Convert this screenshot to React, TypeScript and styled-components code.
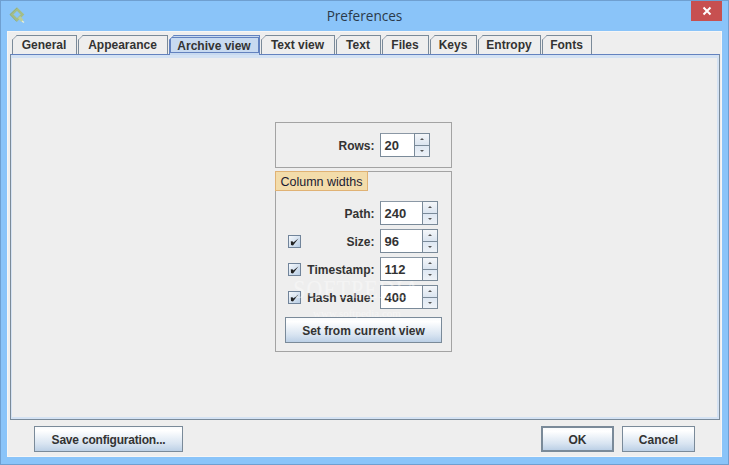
import styled, { createGlobalStyle } from 'styled-components'

const GlobalStyle = createGlobalStyle`
  html, body {
    margin: 0;
    padding: 0;
    background: #8ac4f9;
  }
  * {
    box-sizing: border-box;
  }
`

const Frame = styled.div`
  position: relative;
  width: 729px;
  height: 465px;
  display: flex;
  flex-direction: column;
  background: #8ac4f9;
  border: 1px solid #6f9fd0;
  font-family: 'Liberation Sans', Arial, sans-serif;
  font-size: 12px;
  font-weight: 700;
  color: #333;
  overflow: hidden;
`

const TitleBar = styled.div`
  position: relative;
  height: 29px;
  flex: none;
  display: flex;
  align-items: center;
  justify-content: center;
`

const AppIcon = styled.svg`
  position: absolute;
  left: 8px;
  top: 6px;
`

const TitleText = styled.div`
  font-family: 'Open Sans', 'Noto Sans', sans-serif;
  font-size: 13.6px;
  font-weight: 400;
  color: #2b3a4a;
`

const CloseButton = styled.div`
  position: absolute;
  right: 6px;
  top: 0;
  width: 31px;
  height: 20px;
  background: #c75050;
  display: flex;
  align-items: center;
  justify-content: center;
`

const Client = styled.div`
  margin: 1px 6px 7px 6px;
  flex: 1;
  min-height: 0;
  background: #eeeeee;
  border: 1px solid #f6f6f6;
  display: flex;
  flex-direction: column;
  padding: 3px 1px 0 2px;
`

const TabRow = styled.div`
  display: flex;
  height: 19px;
  padding-left: 2px;
  flex: none;
  position: relative;
  z-index: 1;
`

const Tab = styled.div<{ $w: number; $active?: boolean }>`
  position: relative;
  width: ${({ $w }) => $w}px;
  height: ${({ $active }) => ($active ? 20 : 19)}px;
  display: flex;
  align-items: center;
  justify-content: center;
  padding-right: 1px;
  margin-right: 1px;
  background: ${({ $active }) => ($active ? '#c8daf0' : '#eeeeee')};
  border: 1px solid ${({ $active }) => ($active ? '#6382bf' : '#7a8a99')};
  border-bottom: 0;
  clip-path: polygon(5px 0, 100% 0, 100% 100%, 0 100%, 0 5px);

  ${({ $active }) =>
    $active
      ? `
    &::after {
      content: '';
      position: absolute;
      top: 1px;
      left: 0;
      right: 0;
      bottom: 2px;
      border: 1px solid #6382bf;
    }
  `
      : ''}
`

const TabCorner = styled.span<{ $active?: boolean }>`
  position: absolute;
  left: -2px;
  top: 1px;
  width: 7px;
  height: 1px;
  background: ${({ $active }) => ($active ? '#6382bf' : '#7a8a99')};
  transform: rotate(-45deg);
`

const TabPane = styled.div`
  width: 710px;
  height: 366px;
  flex: none;
  border: 1px solid #7a8a99;
  border-top-color: #6382bf;
  background: #eeeeee;
  box-shadow: inset 1px 0 0 #d4e2f3, inset -2px 0 0 #d4e2f3, inset 0 3px 0 #d4e2f3, inset 0 -2px 0 #d4e2f3;
  display: flex;
  flex-direction: column;
  align-items: center;
  padding: 67px 4px 0 0;
  gap: 3px;
`

const Group = styled.div<{ $h: number }>`
  position: relative;
  width: 177px;
  height: ${({ $h }) => $h}px;
  border: 1px solid #a3a3a3;
  display: flex;
  flex-direction: column;
`

const GroupTitle = styled.div`
  width: 93px;
  height: 20px;
  margin: -1px 0 0 -1px;
  background: #f3dcaa;
  border: 1px solid #e0b274;
  color: #1a1a33;
  font-weight: 400;
  font-size: 12.5px;
  display: flex;
  align-items: center;
  padding: 1px 0 0 5px;
`

const Rows = styled.div`
  display: flex;
  flex-direction: column;
  gap: 4px;
  padding: 10px 0 0 12px;
`

const Row = styled.div`
  display: flex;
  align-items: center;
  height: 24px;
`

const Check = styled.div`
  width: 13px;
  height: 13px;
  flex: none;
  border: 1px solid #71849a;
  background: linear-gradient(135deg, #f6f9fc, #b8cde4);
  display: flex;
  align-items: center;
  justify-content: center;
`

const FieldLabel = styled.label`
  flex: 1;
  text-align: right;
  padding: 1px 5px 0 0;
`

const Spinner = styled.div<{ $w: number; $end: number }>`
  display: flex;
  width: ${({ $w }) => $w}px;
  height: 24px;
  flex: none;
  margin-right: ${({ $end }) => $end}px;
`

const Field = styled.div`
  flex: 1;
  background: #fff;
  border: 1px solid #7a8a99;
  border-top-color: #8b98a5;
  border-right: 0;
  padding: 0 0 0 4px;
  display: flex;
  align-items: center;
  font-size: 13px;
`

const Arrows = styled.div`
  width: 16px;
  flex: none;
  display: flex;
  flex-direction: column;
`

const ArrowButton = styled.div<{ $down?: boolean }>`
  flex: 1;
  border: 1px solid #7a8a99;
  margin-top: ${({ $down }) => ($down ? '-1px' : '0')};
  background: linear-gradient(${({ $down }) => ($down ? '#dfe8f3, #eef2f7' : '#f4f6f9, #dbe5f0')});
  display: flex;
  align-items: center;
  justify-content: center;
`

const Tri = styled.span<{ $down?: boolean }>`
  width: 0;
  height: 0;
  border-left: 2px solid transparent;
  border-right: 2px solid transparent;
  ${({ $down }) => ($down ? 'border-top: 2px solid #555;' : 'border-bottom: 2px solid #555;')}
`

const Button = styled.div<{ $w: number; $default?: boolean }>`
  width: ${({ $w }) => $w}px;
  height: 26px;
  flex: none;
  display: flex;
  align-items: center;
  justify-content: center;
  padding-top: 1px;
  border: ${({ $default }) => ($default ? 2 : 1)}px solid #7a8a99;
  background: linear-gradient(#f8fafc 0%, #ffffff 15%, #d8e4f1 70%, #bcd0e6 100%);
`

const SetButton = styled(Button)`
  margin: 8px 0 0 9px;
  padding-left: 1px;
`

const SaveButton = styled(Button)`
  letter-spacing: -0.2px;
`

const Footer = styled.div`
  display: flex;
  align-items: center;
  padding: 6px 25px 0 24px;
  gap: 8px;
`

const Spacer = styled.div`
  flex: 1;
`

const Watermark = styled.div`
  position: absolute;
  left: 276px;
  top: 277px;
  width: 160px;
  text-align: center;
  color: rgba(255, 255, 255, 0.4);
  font-family: 'Liberation Serif', serif;
  font-weight: 400;
  pointer-events: none;
`

const WatermarkBig = styled.div`
  font-size: 22px;
  letter-spacing: 1px;
  line-height: 24px;
  transform: scaleY(1.15);
`

const WatermarkSmall = styled.div`
  font-size: 11px;
  line-height: 12px;
  margin-top: 5px;
`

const tabs = [
  { label: 'General', w: 65 },
  { label: 'Appearance', w: 90 },
  { label: 'Archive view', w: 91, active: true },
  { label: 'Text view', w: 74 },
  { label: 'Text', w: 45 },
  { label: 'Files', w: 47 },
  { label: 'Keys', w: 47 },
  { label: 'Entropy', w: 63 },
  { label: 'Fonts', w: 50 },
]

const columns = [
  { label: 'Path:', value: '240' },
  { label: 'Size:', value: '96', check: true },
  { label: 'Timestamp:', value: '112', check: true },
  { label: 'Hash value:', value: '400', check: true },
]

const Tick = () => (
  <svg width="9" height="9" viewBox="0 0 9 9">
    <path d="M0.8 4.2 L3 4.4 L3.3 5.4 L8.4 1.6 L3 8.4 L1 8 Z" fill="#222" />
  </svg>
)

const Spin = ({ value, width, end }: { value: string; width: number; end: number }) => (
  <Spinner $w={width} $end={end}>
    <Field>{value}</Field>
    <Arrows>
      <ArrowButton>
        <Tri />
      </ArrowButton>
      <ArrowButton $down>
        <Tri $down />
      </ArrowButton>
    </Arrows>
  </Spinner>
)

const App = () => {
  return (
    <Frame>
      <GlobalStyle />
      <TitleBar>
        <AppIcon width="18" height="18" viewBox="0 0 18 18">
          <path d="M8 2 L2.5 7.5 L8 13 L13.5 7.5 Z" fill="none" stroke="#a3bd88" strokeWidth="2.6" />
          <path d="M8 1 L1 7.5 L7.5 14.5" fill="none" stroke="#8fa97c" strokeWidth="0.8" />
          <path d="M10 10 L13.5 14" stroke="#b9cd9c" strokeWidth="3" />
          <path d="M13 14 L15 15.5" stroke="#e8efd6" strokeWidth="1.5" />
        </AppIcon>
        <TitleText>Preferences</TitleText>
        <CloseButton>
          <svg width="10" height="10" viewBox="0 0 10 10">
            <path d="M1.5 1.5 L8.5 8.5 M8.5 1.5 L1.5 8.5" stroke="#fff" strokeWidth="2" />
          </svg>
        </CloseButton>
      </TitleBar>
      <Client>
        <TabRow>
          {tabs.map((t) => (
            <Tab key={t.label} $w={t.w} $active={t.active}>
              <TabCorner $active={t.active} />
              {t.label}
            </Tab>
          ))}
        </TabRow>
        <TabPane>
          <Group $h={46}>
            <Rows>
              <Row>
                <FieldLabel>Rows:</FieldLabel>
                <Spin value="20" width={50} end={21} />
              </Row>
            </Rows>
          </Group>
          <Group $h={181}>
            <GroupTitle>Column widths</GroupTitle>
            <Rows>
              {columns.map((c) => (
                <Row key={c.label}>
                  {c.check && (
                    <Check>
                      <Tick />
                    </Check>
                  )}
                  <FieldLabel>{c.label}</FieldLabel>
                  <Spin value={c.value} width={58} end={13} />
                </Row>
              ))}
            </Rows>
            <SetButton $w={157}>Set from current view</SetButton>
          </Group>
        </TabPane>
        <Footer>
          <SaveButton $w={149}>Save configuration...</SaveButton>
          <Spacer />
          <Button $w={73} $default>
            OK
          </Button>
          <Button $w={73}>Cancel</Button>
        </Footer>
      </Client>
      <Watermark>
        <WatermarkBig>SOFTPEDIA</WatermarkBig>
        <WatermarkSmall>www.softpedia.com</WatermarkSmall>
      </Watermark>
    </Frame>
  )
}

export default App
